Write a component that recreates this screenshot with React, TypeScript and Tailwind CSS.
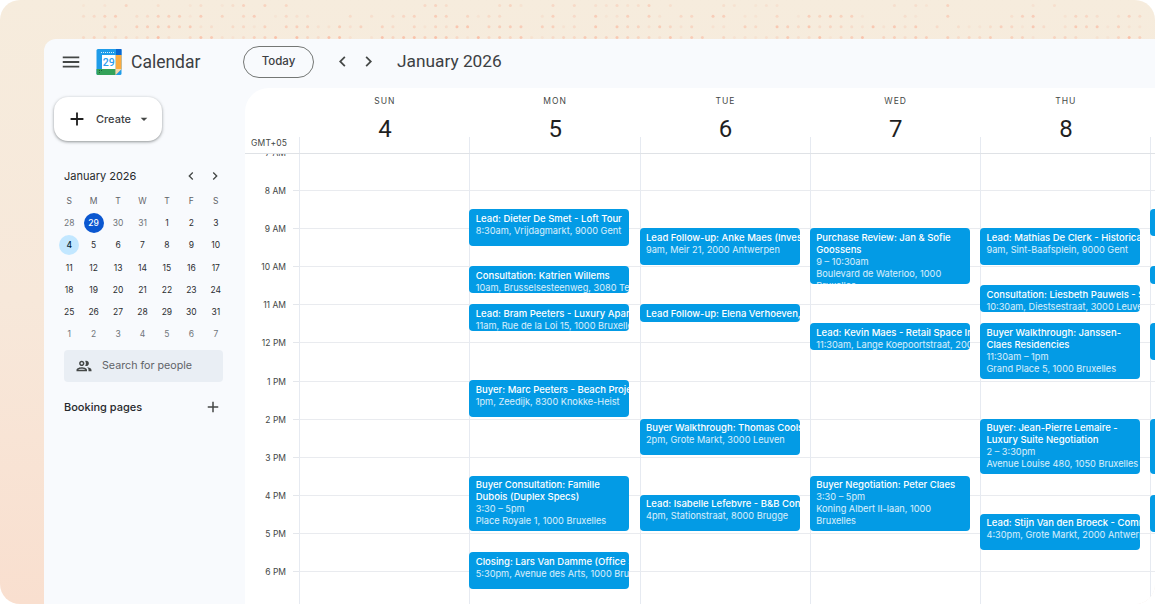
import { MdMenu, MdChevronLeft, MdChevronRight, MdAdd, MdOutlineGroup, MdArrowDropDown } from 'react-icons/md';

type Ev = { top: number; height: number; lines: string[]; titleLines?: number };

const hours = ['7 AM', '8 AM', '9 AM', '10 AM', '11 AM', '12 PM', '1 PM', '2 PM', '3 PM', '4 PM', '5 PM', '6 PM', '7 PM'];

const days: { name: string; num: number; events: Ev[] }[] = [
  { name: 'SUN', num: 4, events: [] },
  {
    name: 'MON',
    num: 5,
    events: [
      { top: 55, height: 36.5, lines: ['Lead: Dieter De Smet - Loft Tour', '8:30am, Vrijdagmarkt, 9000 Gent'] },
      { top: 112, height: 27, lines: ['Consultation: Katrien Willems', '10am, Brusselsesteenweg, 3080 Tervuren'] },
      { top: 150, height: 27, lines: ['Lead: Bram Peeters - Luxury Apartment', '11am, Rue de la Loi 15, 1000 Bruxelles'] },
      { top: 226, height: 37, lines: ['Buyer: Marc Peeters - Beach Project', '1pm, Zeedijk, 8300 Knokke-Heist'] },
      { top: 321.5, height: 55.5, titleLines: 2, lines: ['Buyer Consultation: Famille', 'Dubois (Duplex Specs)', '3:30 – 5pm', 'Place Royale 1, 1000 Bruxelles'] },
      { top: 398, height: 36.5, lines: ['Closing: Lars Van Damme (Office Space)', '5:30pm, Avenue des Arts, 1000 Bruxelles'] },
    ],
  },
  {
    name: 'TUE',
    num: 6,
    events: [
      { top: 74, height: 37, lines: ['Lead Follow-up: Anke Maes (Investor)', '9am, Meir 21, 2000 Antwerpen'] },
      { top: 150, height: 18, lines: ['Lead Follow-up: Elena Verhoeven, 11am'] },
      { top: 264.5, height: 36.5, lines: ['Buyer Walkthrough: Thomas Cools', '2pm, Grote Markt, 3000 Leuven'] },
      { top: 340.5, height: 36.5, lines: ['Lead: Isabelle Lefebvre - B&B Conversion', '4pm, Stationstraat, 8000 Brugge'] },
    ],
  },
  {
    name: 'WED',
    num: 7,
    events: [
      { top: 74, height: 55.5, titleLines: 2, lines: ['Purchase Review: Jan & Sofie', 'Goossens', '9 – 10:30am', 'Boulevard de Waterloo, 1000', 'Bruxelles'] },
      { top: 169, height: 27, lines: ['Lead: Kevin Maes - Retail Space Inquiry', '11:30am, Lange Koepoortstraat, 2000'] },
      { top: 321.5, height: 55.5, lines: ['Buyer Negotiation: Peter Claes', '3:30 – 5pm', 'Koning Albert II-laan, 1000', 'Bruxelles'] },
    ],
  },
  {
    name: 'THU',
    num: 8,
    events: [
      { top: 74, height: 37, lines: ['Lead: Mathias De Clerk - Historical Home', '9am, Sint-Baafsplein, 9000 Gent'] },
      { top: 131, height: 27, lines: ['Consultation: Liesbeth Pauwels - Sale', '10:30am, Diestsestraat, 3000 Leuven'] },
      { top: 169, height: 55.5, titleLines: 2, lines: ['Buyer Walkthrough: Janssen-', 'Claes Residencies', '11:30am – 1pm', 'Grand Place 5, 1000 Bruxelles'] },
      { top: 264.5, height: 55.5, titleLines: 2, lines: ['Buyer: Jean-Pierre Lemaire -', 'Luxury Suite Negotiation', '2 – 3:30pm', 'Avenue Louise 480, 1050 Bruxelles'] },
      { top: 359.5, height: 36.5, lines: ['Lead: Stijn Van den Broeck - Commercial', '4:30pm, Grote Markt, 2000 Antwerpen'] },
    ],
  },
  {
    name: 'FRI',
    num: 9,
    events: [
      { top: 55, height: 27, lines: [] },
      { top: 112, height: 18, lines: [] },
      { top: 169, height: 37, lines: [] },
      { top: 264.5, height: 55.5, lines: [] },
      { top: 341, height: 36.5, lines: [] },
    ],
  },
];

const miniWeeks = [
  [28, 29, 30, 31, 1, 2, 3],
  [4, 5, 6, 7, 8, 9, 10],
  [11, 12, 13, 14, 15, 16, 17],
  [18, 19, 20, 21, 22, 23, 24],
  [25, 26, 27, 28, 29, 30, 31],
  [1, 2, 3, 4, 5, 6, 7],
];

// pseudo random halftone dots of the backdrop
function dots() {
  const out: { x: number; y: number; o: number }[] = [];
  for (let r = 0; r < 4; r++) {
    for (let c = 0; c < 100; c++) {
      const x = 83.5 + c * 10.67;
      const n = Math.abs(Math.sin(c * 12.9898 + r * 78.233) * 43758.5453) % 1;
      const fade = 0.45 + r * 0.15;
      if (n < fade) out.push({ x, y: 5.5 + r * 10.67, o: 0.12 + n * 0.85 });
    }
  }
  return out;
}

function Logo() {
  return (
    <svg width="26" height="26" viewBox="0 0 26 26" className="shrink-0">
      <rect x="0.5" y="0" width="25" height="26" rx="1.5" fill="#1f9ce9" />
      <rect x="20" y="0" width="5.5" height="6" fill="#0b67d0" />
      <rect x="6" y="0" width="14" height="6" fill="#1f9ce9" />
      <path d="M19.5 6h6v14l-6 6z" fill="#fbab3f" />
      <path d="M0.5 20h19v6h-17.5a1.5 1.5 0 0 1-1.5-1.5z" fill="#34a259" />
      <rect x="6" y="6" width="13.5" height="14" fill="#ffffff" />
      <path d="M19.5 20h6l-6 6z" fill="#f0d8b0" />
      <text x="12.8" y="17" textAnchor="middle" fontSize="10.5" fontWeight="500" fill="#2a9cf0" fontFamily="Roboto, sans-serif">29</text>
      <g fill="#d6eefc">
        <rect x="5" y="3" width="1" height="1" />
        <rect x="7" y="3" width="1" height="1" />
        <rect x="9" y="3" width="1" height="1" />
        <rect x="11" y="3" width="1" height="1" />
        <rect x="13" y="3" width="1" height="1" />
        <rect x="15" y="3" width="1" height="1" />
        <rect x="17" y="3" width="1" height="1" />
      </g>
      <g fill="#1b5e3a">
        <rect x="3" y="21" width="1" height="1" />
        <rect x="5" y="21" width="1" height="1" />
        <rect x="3" y="23" width="1" height="1" />
      </g>
    </svg>
  );
}

function EventCard({ ev }: { ev: Ev }) {
  const titleLines = ev.titleLines ?? 1;
  return (
    <div
      className="absolute left-[-1px] w-[160px] overflow-hidden rounded-[4px] bg-[#039be5] pl-[6.5px] pt-[3.5px] text-[9.5px] leading-[12px] text-white"
      style={{ top: ev.top, height: ev.height }}
    >
      {ev.lines.map((line, i) => (
        <div key={i} className={i < titleLines ? 'whitespace-nowrap font-medium' : 'whitespace-nowrap text-[9.2px] text-white/85'}>
          {line}
        </div>
      ))}
    </div>
  );
}

function MiniCalendar() {
  return (
    <div className="pl-[20px]">
      <div className="flex h-[24px] items-center text-[#1f1f1f]">
        <span className="w-[119px] text-[11px] font-normal text-[#27292c]">January 2026</span>
        <div className="flex items-center gap-[8px] text-[#444746]">
          <MdChevronLeft size={16} />
          <MdChevronRight size={16} />
        </div>
      </div>
      <div className="mt-[2px] grid w-[171px] -translate-x-[7px] grid-cols-7 text-center text-[8.5px] leading-[22.2px] text-[#3c4043]">
        {['S', 'M', 'T', 'W', 'T', 'F', 'S'].map((d, i) => (
          <div key={i} className="h-[22.2px] text-[#5f6368]">{d}</div>
        ))}
        {miniWeeks.map((week, w) =>
          week.map((d, i) => {
            const muted = (w === 0 && i !== 1 && i < 4) || w === 5;
            const selected = w === 0 && i === 1;
            const current = w === 1 && i === 0;
            return (
              <div key={`${w}-${i}`} className="flex h-[22.2px] items-center justify-center">
                <span
                  className={
                    selected
                      ? 'flex h-[20px] w-[20px] items-center justify-center rounded-full bg-[#0b57d0] font-medium text-white'
                      : current
                        ? 'flex h-[20px] w-[20px] items-center justify-center rounded-full bg-[#c2e7ff] font-medium text-[#001d35]'
                        : muted
                          ? 'text-[#70757a]'
                          : 'text-[#2b2d30]'
                  }
                >
                  {d}
                </span>
              </div>
            );
          }),
        )}
      </div>
    </div>
  );
}

export default function App() {
  return (
    <div className="h-[604px] w-[1156px] overflow-hidden bg-white font-['Inter',sans-serif]">
      <div className="relative h-[604px] w-[1155px] overflow-hidden rounded-[20px] bg-gradient-to-b from-[#f6ecdd] via-[#f7e8da] to-[#f9dfcf] pl-[44px] pt-[39px]">
        <svg className="absolute left-0 top-0" width="1155" height="39">
          {dots().map((d, i) => (
            <circle key={i} cx={d.x} cy={d.y} r="1.5" fill="#f9b9a0" opacity={d.o} />
          ))}
        </svg>
        <div className="relative flex h-[565px] flex-col overflow-hidden rounded-tl-[12px] bg-[#f8fafd]">
          <header className="flex h-[49px] shrink-0 items-center pb-[4px]">
            <div className="flex w-[199px] items-center pl-[16px]">
              <MdMenu size={22} className="text-[#444746]" />
              <div className="ml-[14px] mt-[1px]"><Logo /></div>
              <span className="ml-[9px] mt-[2px] font-['Roboto',sans-serif] text-[17.5px] text-[#3c4043]">Calendar</span>
            </div>
            <button className="h-[32px] w-[71px] rounded-full border border-[#747775] pt-[1px] text-[11.5px] font-medium text-[#3c4043]">Today</button>
            <div className="ml-[18px] flex items-center gap-[5px] text-[#444746]">
              <MdChevronLeft size={21} />
              <MdChevronRight size={21} />
            </div>
            <span className="ml-[18px] mt-[1.5px] font-['Roboto',sans-serif] text-[17.3px] text-[#3c4043]">January 2026</span>
          </header>
          <div className="flex min-h-0 flex-1">
            <aside className="w-[201px] shrink-0">
              <button className="ml-[10px] mt-[9px] flex h-[44px] w-[108px] items-center rounded-[14px] bg-white pl-[12px] shadow-[0_1px_3px_1px_rgba(60,64,67,0.2),0_1px_2px_rgba(60,64,67,0.3)]">
                <MdAdd size={22} className="text-[#1f1f1f]" />
                <span className="ml-[8px] pt-[1px] text-[11px] font-medium text-[#3c4043]">Create</span>
                <MdArrowDropDown size={16} className="ml-[5px] text-[#444746]" />
              </button>
              <div className="mt-[23px]"><MiniCalendar /></div>
              <div className="ml-[20px] mt-[5px] flex h-[32px] w-[158.5px] items-center rounded-[4px] bg-[#e9eef4] pl-[11px] text-[10.7px] text-[#5f6368]">
                <MdOutlineGroup size={18} className="text-[#444746]" />
                <span className="ml-[9px]">Search for people</span>
              </div>
              <div className="ml-[20px] mt-[16px] flex w-[158px] items-center justify-between text-[#27292c]">
                <span className="text-[11px] font-medium">Booking pages</span>
                <MdAdd size={18} className="text-[#444746]" />
              </div>
            </aside>
            <main className="flex min-w-0 flex-1 flex-col overflow-hidden rounded-tl-[24px] bg-white">
              <div className="flex h-[66px] shrink-0 border-b border-[#dfe2e6] pl-[54px]">
                {days.map((day, i) => (
                  <div key={i} className="relative w-[170.25px] shrink-0 pl-[1.5px] text-center">
                    <div className="pt-[7px] text-[8.5px] font-normal leading-[12px] tracking-[1px] text-[#444746]">{day.name}</div>
                    <div className="mt-[7px] font-['Roboto',sans-serif] text-[24px] leading-[30px] text-[#1f1f1f]">{day.num}</div>
                    <div className="absolute bottom-0 left-0 h-[16px] border-l border-[#e6eaf1]" />
                    {i === 0 && <div className="absolute bottom-[4px] left-[-48px] text-[8.5px] leading-[12px] tracking-[0.2px] text-[#444746]">GMT+05</div>}
                  </div>
                ))}
              </div>
              <div className="flex min-h-0 flex-1 overflow-hidden">
                <div className="-mt-[2px] w-[54px] shrink-0">
                  {hours.map((h) => (
                    <div key={h} className="flex h-[38.1px]">
                      <div className="w-[48px] -translate-y-[5px] pr-[7px] text-right text-[8.5px] leading-[12px] text-[#444746]">{h}</div>
                      <div className="h-0 w-[6px] border-t border-[#e4e7ec]" />
                    </div>
                  ))}
                </div>
                {days.map((day, i) => (
                  <div key={i} className="relative -mt-[2px] w-[170.25px] shrink-0 border-l border-[#e6eaf1]">
                    {hours.map((h) => (
                      <div key={h} className="h-[38.1px] border-t border-[#e9ebef]" />
                    ))}
                    {day.events.map((ev, k) => (
                      <EventCard key={k} ev={{ ...ev, top: ev.top + 2 }} />
                    ))}
                  </div>
                ))}
              </div>
            </main>
          </div>
        </div>
      </div>
    </div>
  );
}
